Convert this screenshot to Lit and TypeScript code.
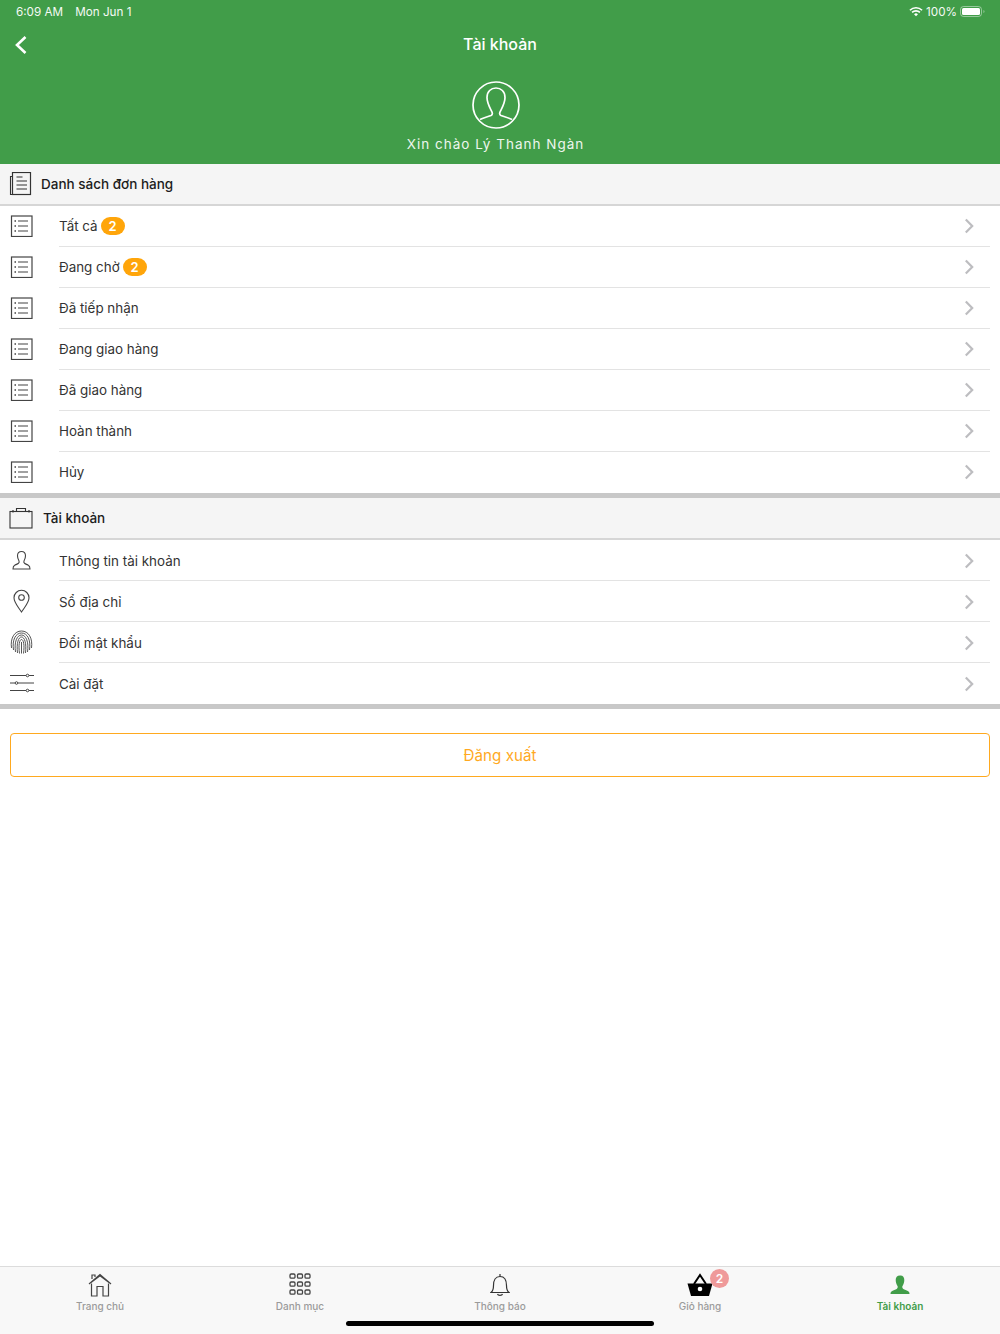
import { LitElement, html, css, svg } from "lit";
import { customElement } from "lit/decorators.js";

const S = (w: number, h: number, body: unknown, cls = "") =>
  html`<svg class=${cls} width=${w} height=${h} viewBox="0 0 ${w} ${h}" fill="none" stroke="currentColor">${body}</svg>`;

const listIcon = S(24, 22, svg`
  <rect x="2.500" y="1" width="20.500" height="20.500" stroke-width="1.200" stroke="#444"/>
  <path d="M9 6h10M9 11h10M9 16h10" stroke-width="1.100" stroke="#444"/>
  <path d="M5.500 6h1.500M5.500 11h1.500M5.500 16h1.500" stroke-width="1.400" stroke="#444"/>`);

const ordersIcon = S(24, 24, svg`
  <path d="M3.500 4.500H1.500V22.500H20" stroke-width="1.100" stroke="#333"/>
  <rect x="3.500" y=".5" width="18" height="22" stroke-width="1.200" stroke="#333"/>
  <path d="M7.500 5h6M7.500 9h10.500M7.500 13h10.500M7.500 17h10.500" stroke-width="1.100" stroke="#333"/>`);

const caseIcon = S(24, 24, svg`
  <rect x="1" y="5.500" width="22" height="16.500" stroke-width="1.100" stroke="#333"/>
  <path d="M7.500 5V2.500H16.500V5" stroke-width="1.100" stroke="#333"/>
  <path d="M4 4v2.500M20 4v2.500" stroke-width="1.200" stroke="#333"/>`);

const userIcon = S(22, 22, svg`
  <path d="M12.600 2.500c-2.700 0-4.100 1.800-4.100 4.300 0 2 .7 3.800 1.400 5 .5 1 .4 1.900-.4 2.500-1 .8-2.600 1.300-3.800 1.900-1.100.5-1.700 1.400-1.700 3.800H21c0-2.400-.6-3.300-1.700-3.800-1.200-.6-2.800-1.100-3.800-1.900-.8-.6-.9-1.500-.4-2.500.7-1.200 1.400-3 1.400-5 0-2.500-1.400-4.300-3.900-4.300Z" stroke-width="1.100" stroke="#444"/>`);

const pinIcon = S(24, 24, svg`<g transform="translate(1.500 0)">
  <path d="M11 23C7 17 3.500 13.500 3.500 8.800A7.500 7.500 0 0 1 18.500 8.800C18.500 13.500 15 17 11 23Z" stroke-width="1.100" stroke="#444"/>
  <circle cx="11" cy="8.500" r="2.800" stroke-width="1.100" stroke="#444"/></g>`);

const fingerIcon = S(24, 24, svg`<g stroke="#444" stroke-width=".9" transform="translate(.5 0)">
  <path d="M2 18C.6 8 5 1 12 1s11.400 7 10 17"/>
  <path d="M4 20C2.500 10 6 3 12 3s9.500 7 8 17"/>
  <path d="M6 22C4.500 12 7.500 5 12 5s7.500 7 6 17"/>
  <path d="M8 23C6.800 13 9 7 12 7s5.200 6 4 16"/>
  <path d="M10 23.500C8.800 15 10 9.500 12 9.500s3.200 5.500 2 14"/>
  <path d="M12 12v11.500"/></g>`);

const sliderIcon = S(26, 20, svg`<g stroke="#444" stroke-width="1">
  <path d="M1 2.500H17M20 2.500H25M1 10H6M9 10H25M1 17.500H17M20 17.500H25"/>
  <circle cx="18.500" cy="2.500" r="1.300"/><circle cx="7.500" cy="10" r="1.300"/><circle cx="18.500" cy="17.500" r="1.300"/></g>`);

const chevron = S(10, 16, svg`<path d="M1.800 1.500 8.200 8 1.800 14.500" stroke="#bdbdc0" stroke-width="2.200"/>`, "chev");

const orders = [
  { t: "Tất cả", b: "2" },
  { t: "Đang chờ", b: "2" },
  { t: "Đã tiếp nhận" },
  { t: "Đang giao hàng" },
  { t: "Đã giao hàng" },
  { t: "Hoàn thành" },
  { t: "Hủy" },
];
const account = [
  { t: "Thông tin tài khoản", i: userIcon },
  { t: "Sổ địa chỉ", i: pinIcon },
  { t: "Đổi mật khẩu", i: fingerIcon },
  { t: "Cài đặt", i: sliderIcon },
];

@customElement("app-root")
export class AppRoot extends LitElement {
  static styles = css`
    :host { display: flex; flex-direction: column; height: 1334px; background: #fff; overflow: hidden;
      font-family: Inter, "Noto Sans", sans-serif; color: #222; }
    .head { height: 164px; box-sizing: border-box; background: #419d49; color: #fff; display: flex; flex-direction: column; flex: none; }
    .status { height: 23px; display: flex; align-items: center; padding: 0 15px 0 16px; font-size: 11.700px; gap: 12px; color: #f4f9f4; }
    .spacer { flex: 1; }
    .st-right { display: flex; align-items: center; gap: 3px; }
    .nav { height: 41px; display: grid; grid-template-columns: 60px 1fr 60px; align-items: center; }
    .back { padding-left: 14px; padding-top: 3px; display: flex; }
    .title { text-align: center; font-size: 16px; font-weight: 500; }
    .profile { display: flex; flex-direction: column; align-items: center; padding-right: 9px; gap: 6px; margin-top: 17px; }
    .hello { font-size: 13.500px; letter-spacing: 1px; line-height: 18px; color: #eef6ee; }
    .sec { height: 42px; box-sizing: border-box; background: #f5f5f5; border-bottom: 2px solid #d6d6d6; display: flex; align-items: center; padding-left: 9px; gap: 8px; font-size: 13.500px; font-weight: 500; color: #1c1c1c; }
    .sec svg { flex: none; }
    .sec.acct { gap: 10px; }
    .group { flex: none; }
    .row { height: 41px; display: flex; align-items: stretch; }
    .ic { width: 59px; flex: none; display: flex; align-items: center; padding-left: 9px; box-sizing: border-box; }
    .ic svg { margin-top: -1px; }
    .body { flex: 1; margin-right: 10px; display: flex; align-items: center; font-size: 13.400px; gap: 3px; border-bottom: 1px solid #e3e3e3; color: #333; box-sizing: border-box; }
    .row:last-child .body { border-bottom-color: transparent; }
    .acct-rows .chev, .acct-rows .label { margin-top: 2px; }
    .badge { background: #ffa50a; color: #fff; font-size: 13px; font-weight: 600; height: 18px; width: 24px; border-radius: 9px; display: flex; align-items: center; justify-content: center; }
    .chev { margin-left: auto; margin-right: 16px; flex: none; }
    .div { height: 5px; background: #c8c8c8; flex: none; }
    .logout-wrap { padding: 24px 10px 0; flex: 1; }
    .logout { height: 44px; box-sizing: border-box; border: 1px solid #ffa91f; border-radius: 4px; display: flex; align-items: center; justify-content: center; color: #ffa91f; font-size: 15.200px; }
    .tabs { height: 68px; box-sizing: border-box; flex: none; background: #f8f8f8; border-top: 1px solid #dcdcdc; display: grid; grid-template-columns: repeat(5, 1fr); position: relative; }
    .tab { display: flex; flex-direction: column; align-items: center; font-size: 10px; color: #9b9b9b; padding-top: 6px; font-weight: 500; }
    .tab svg { display: block; }
    .tab span { line-height: 14px; }
    .tab.on { color: #419d49; font-weight: 600; }
    .icon-box { position: relative; height: 26px; }
    .cnt { position: absolute; top: -4px; left: 23px; width: 19px; height: 19px; border-radius: 50%; background: #ef9a9a; color: #fff; font-size: 12px; font-weight: 600; display: flex; align-items: center; justify-content: center; }
    .home-ind { position: absolute; left: 346px; top: 54px; width: 308px; height: 5px; border-radius: 3px; background: #000; }
  `;

  render() {
    return html`
      <div class="head">
        <div class="status">
          <span>6:09 AM</span><span>Mon Jun 1</span><span class="spacer"></span>
          <span class="st-right">
            <svg width="14" height="11" viewBox="0 0 15 11" fill="none" stroke="#fff" stroke-width="1.700">
              <path d="M1 4.200a9.200 9.200 0 0 1 13 0M3.300 6.500a6 6 0 0 1 8.400 0"/>
              <path d="M5.400 8.400a3 3 0 0 1 4.200 0L7.500 10.600Z" fill="#fff" stroke="none"/>
            </svg>
            <span>100%</span>
            <svg width="25" height="11" viewBox="0 0 25 11" fill="none">
              <rect x=".5" y=".5" width="21" height="10" rx="3" stroke="#fff" stroke-opacity=".45"/>
              <rect x="2" y="2" width="18" height="7" rx="1.500" fill="#fff"/>
              <path d="M23.500 4c.6.3.9.800.9 1.500s-.3 1.200-.9 1.500Z" fill="#fff" fill-opacity=".5"/>
            </svg>
          </span>
        </div>
        <div class="nav">
          <div class="back">
            <svg width="14" height="20" viewBox="0 0 14 20" fill="none" stroke="#fff" stroke-width="2.600"><path d="M11.500 2 3 10l8.500 8"/></svg>
          </div>
          <div class="title">Tài khoản</div>
          <div></div>
        </div>
        <div class="profile">
          <svg width="48" height="48" viewBox="0 0 48 48" fill="none" stroke="#fff" stroke-width="1.700">
            <circle cx="24" cy="24" r="23"/>
            <path d="M8 38.500c4-2 8-2.800 11-4 1.800-.9 1.600-2.500.6-4.400C18 27 15 22 15 16.500 15 10.500 19 7 24 7s9 3.500 9 9.500c0 5.500-3 10.500-4.600 13.600-1 1.900-1.200 3.500.6 4.400 3 1.200 7 2 11 4"/>
          </svg>
          <div class="hello">Xin chào Lý Thanh Ngàn</div>
        </div>
      </div>

      <div class="group orders">
        <div class="sec">${ordersIcon}<span>Danh sách đơn hàng</span></div>
        ${orders.map((o) => html`
          <div class="row">
            <div class="ic">${listIcon}</div>
            <div class="body"><span class="label">${o.t}</span>${o.b ? html`<span class="badge">${o.b}</span>` : ""}${chevron}</div>
          </div>`)}
      </div>
      <div class="div"></div>

      <div class="group acct-rows">
        <div class="sec acct">${caseIcon}<span>Tài khoản</span></div>
        ${account.map((o) => html`
          <div class="row">
            <div class="ic">${o.i}</div>
            <div class="body"><span class="label">${o.t}</span>${chevron}</div>
          </div>`)}
      </div>
      <div class="div"></div>

      <div class="logout-wrap"><div class="logout">Đăng xuất</div></div>

      <div class="tabs">
        <div class="tab">
          <div class="icon-box">
            <svg width="24" height="24" viewBox="0 0 24 24" fill="none" stroke="#444" stroke-width="1.200">
              <path d="M1 11 12 1.500 23 11M3 9.500 12 2.800l9 6.700"/>
              <path d="M3.500 10.500V23H9V13.500h6V23h5.500V10.500"/>
              <path d="M4 6V2h3v2"/>
            </svg>
          </div>
          <span>Trang chủ</span>
        </div>
        <div class="tab">
          <div class="icon-box">
            <svg width="22" height="24" viewBox="0 0 22 24" fill="none" stroke="#444" stroke-width="1.300">
              ${[1, 9, 17].map((y) => [1, 8.500, 16].map((x) => svg`<rect x=${x} y=${y} width="5" height="4.200" rx="1.200"/>`))}
            </svg>
          </div>
          <span>Danh mục</span>
        </div>
        <div class="tab">
          <div class="icon-box">
            <svg width="20" height="24" viewBox="0 0 20 24" fill="none" stroke="#333" stroke-width="1.200">
              <path d="M1 19.500c2-1.500 2.500-3.500 2.500-7C3.500 7.500 5.500 3.500 10 3.500s6.500 4 6.500 9c0 3.500.5 5.500 2.500 7Z"/>
              <path d="M10 1v2.500M7.500 21c.5 1.800 4.500 1.800 5 0" />
            </svg>
          </div>
          <span>Thông báo</span>
        </div>
        <div class="tab">
          <div class="icon-box">
            <svg width="26" height="24" viewBox="0 0 26 24">
              <path d="M.5 10.500H25.500L22 23H4Z" fill="#000"/>
              <path d="M7 11 13 2l6 9" fill="none" stroke="#000" stroke-width="2"/>
              <circle cx="13" cy="16" r="2.300" fill="#fff"/>
            </svg>
            <div class="cnt">2</div>
          </div>
          <span>Giỏ hàng</span>
        </div>
        <div class="tab on">
          <div class="icon-box">
            <svg width="20" height="24" viewBox="0 0 20 24">
              <path d="M10 2.500c-3 0-4.300 2-4.300 4.500 0 2.200.8 4.500 1.800 6 .5 1 .2 2.200-.8 3-1.300.9-3.300 1.300-4.500 2.100C1.200 18.500.5 19.500.5 21h19c0-1.500-.7-2.500-1.700-2.900-1.200-.8-3.200-1.200-4.500-2.100-1-.8-1.300-2-.8-3 1-1.500 1.800-3.800 1.800-6 0-2.500-1.300-4.500-3.800-4.500Z" fill="#419d49"/>
            </svg>
          </div>
          <span>Tài khoản</span>
        </div>
        <div class="home-ind"></div>
      </div>
    `;
  }
}
